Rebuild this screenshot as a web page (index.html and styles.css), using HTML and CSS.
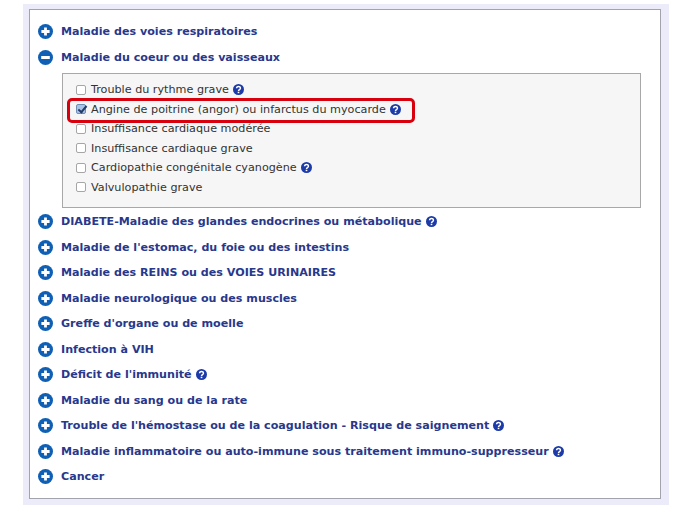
FILE: index.html
```html
<!DOCTYPE html>
<html>
<head>
    <title>Maladies</title>
    <link rel="stylesheet" href="styles.css">
</head>
<body>
    <svg class="defs" width="0" height="0">
        <symbol id="plus" viewBox="0 0 15 15"><circle cx="7.5" cy="7.5" r="7.5" fill="#0f5fb4"/><path d="M7.5 3.400v8.200M3.400 7.500h8.200" stroke="#fff" stroke-width="2.800"/></symbol>
        <symbol id="minus" viewBox="0 0 15 15"><circle cx="7.5" cy="7.5" r="7.5" fill="#0f5fb4"/><path d="M3.200 7.500h8.600" stroke="#fff" stroke-width="3"/></symbol>
        <symbol id="help" viewBox="0 0 12 12"><circle cx="6" cy="6" r="6" fill="#1c3aa8"/><path d="M3.900 4.700c0-2.700 4.200-2.700 4.200-.2 0 1.600-2.100 1.500-2.100 3" fill="none" stroke="#fff" stroke-width="1.600"/><rect x="5.100" y="8.400" width="1.800" height="1.600" fill="#fff"/></symbol>
    </svg>
    <div class="page">
        <div class="panel">
            <div class="row"><svg class="toggle"><use href="#plus"/></svg><span>Maladie des voies respiratoires</span></div>
            <div class="row"><svg class="toggle"><use href="#minus"/></svg><span>Maladie du coeur ou des vaisseaux</span></div>

            <div class="sublist">
                <label class="item"><input type="checkbox"><span>Trouble du rythme grave</span><svg class="help"><use href="#help"/></svg></label>
                <label class="item marked"><input type="checkbox" checked><span>Angine de poitrine (angor) ou infarctus du myocarde</span><svg class="help"><use href="#help"/></svg></label>
                <label class="item"><input type="checkbox"><span>Insuffisance cardiaque modérée</span></label>
                <label class="item"><input type="checkbox"><span>Insuffisance cardiaque grave</span></label>
                <label class="item"><input type="checkbox"><span>Cardiopathie congénitale cyanogène</span><svg class="help"><use href="#help"/></svg></label>
                <label class="item"><input type="checkbox"><span>Valvulopathie grave</span></label>
            </div>

            <div class="row"><svg class="toggle"><use href="#plus"/></svg><span>DIABETE-Maladie des glandes endocrines ou métabolique</span><svg class="help"><use href="#help"/></svg></div>
            <div class="row"><svg class="toggle"><use href="#plus"/></svg><span>Maladie de l'estomac, du foie ou des intestins</span></div>
            <div class="row"><svg class="toggle"><use href="#plus"/></svg><span>Maladie des REINS ou des VOIES URINAIRES</span></div>
            <div class="row"><svg class="toggle"><use href="#plus"/></svg><span>Maladie neurologique ou des muscles</span></div>
            <div class="row"><svg class="toggle"><use href="#plus"/></svg><span>Greffe d'organe ou de moelle</span></div>
            <div class="row"><svg class="toggle"><use href="#plus"/></svg><span>Infection à VIH</span></div>
            <div class="row"><svg class="toggle"><use href="#plus"/></svg><span>Déficit de l'immunité</span><svg class="help"><use href="#help"/></svg></div>
            <div class="row"><svg class="toggle"><use href="#plus"/></svg><span>Maladie du sang ou de la rate</span></div>
            <div class="row"><svg class="toggle"><use href="#plus"/></svg><span>Trouble de l'hémostase ou de la coagulation - Risque de saignement</span><svg class="help"><use href="#help"/></svg></div>
            <div class="row"><svg class="toggle"><use href="#plus"/></svg><span>Maladie inflammatoire ou auto-immune sous traitement immuno-suppresseur</span><svg class="help"><use href="#help"/></svg></div>
            <div class="row"><svg class="toggle"><use href="#plus"/></svg><span>Cancer</span></div>
        </div>
    </div>
</body>
</html>
```

FILE: styles.css
```css
body { margin: 0; background: #fff; font-family: "DejaVu Sans", Verdana, sans-serif; }
.defs { position: absolute; }
.page { width: 646px; height: 501px; margin: 4px 0 0 23px; padding: 5px 8px 6px 6px; box-sizing: border-box; background: #ebebfa; }
.panel { height: 490px; box-sizing: border-box; padding: 9px 19px 0 8px; background: #fff; border: 1px solid #a3a3ad; }
.row { display: flex; align-items: center; height: 25.5px; font-size: 11.12px; font-weight: bold; color: #28388c; white-space: nowrap; }
.toggle { width: 15px; height: 15px; margin-right: 8px; flex: none; }
.help { width: 11px; height: 11px; margin-left: 4px; flex: none; }
.sublist { margin: 3px 0 1px 24px; padding: 6px 0 10px 13px; background: #f6f6f6; border: 1px solid #a8a8a8; }
.item { position: relative; display: flex; align-items: center; height: 19.5px; font-size: 11.2px; color: #333; white-space: nowrap; }
.item input { appearance: none; position: relative; width: 10px; height: 10px; margin: 0 5px 0 0; flex: none; background: #fff; border: 1px solid #a6a6a6; border-radius: 2px; }
.item input:checked { background: #a9c3e6; border-color: #6f8db5; }
.item input:checked::after { content: ""; position: absolute; left: 2.5px; top: -1px; width: 3px; height: 7px; border: solid #223a66; border-width: 0 2px 2px 0; transform: rotate(40deg); }
.marked::after { content: ""; position: absolute; left: -9px; top: -1.5px; width: 348px; height: 24.5px; box-sizing: border-box; border: 3px solid #d8000c; border-radius: 5px; }
```
